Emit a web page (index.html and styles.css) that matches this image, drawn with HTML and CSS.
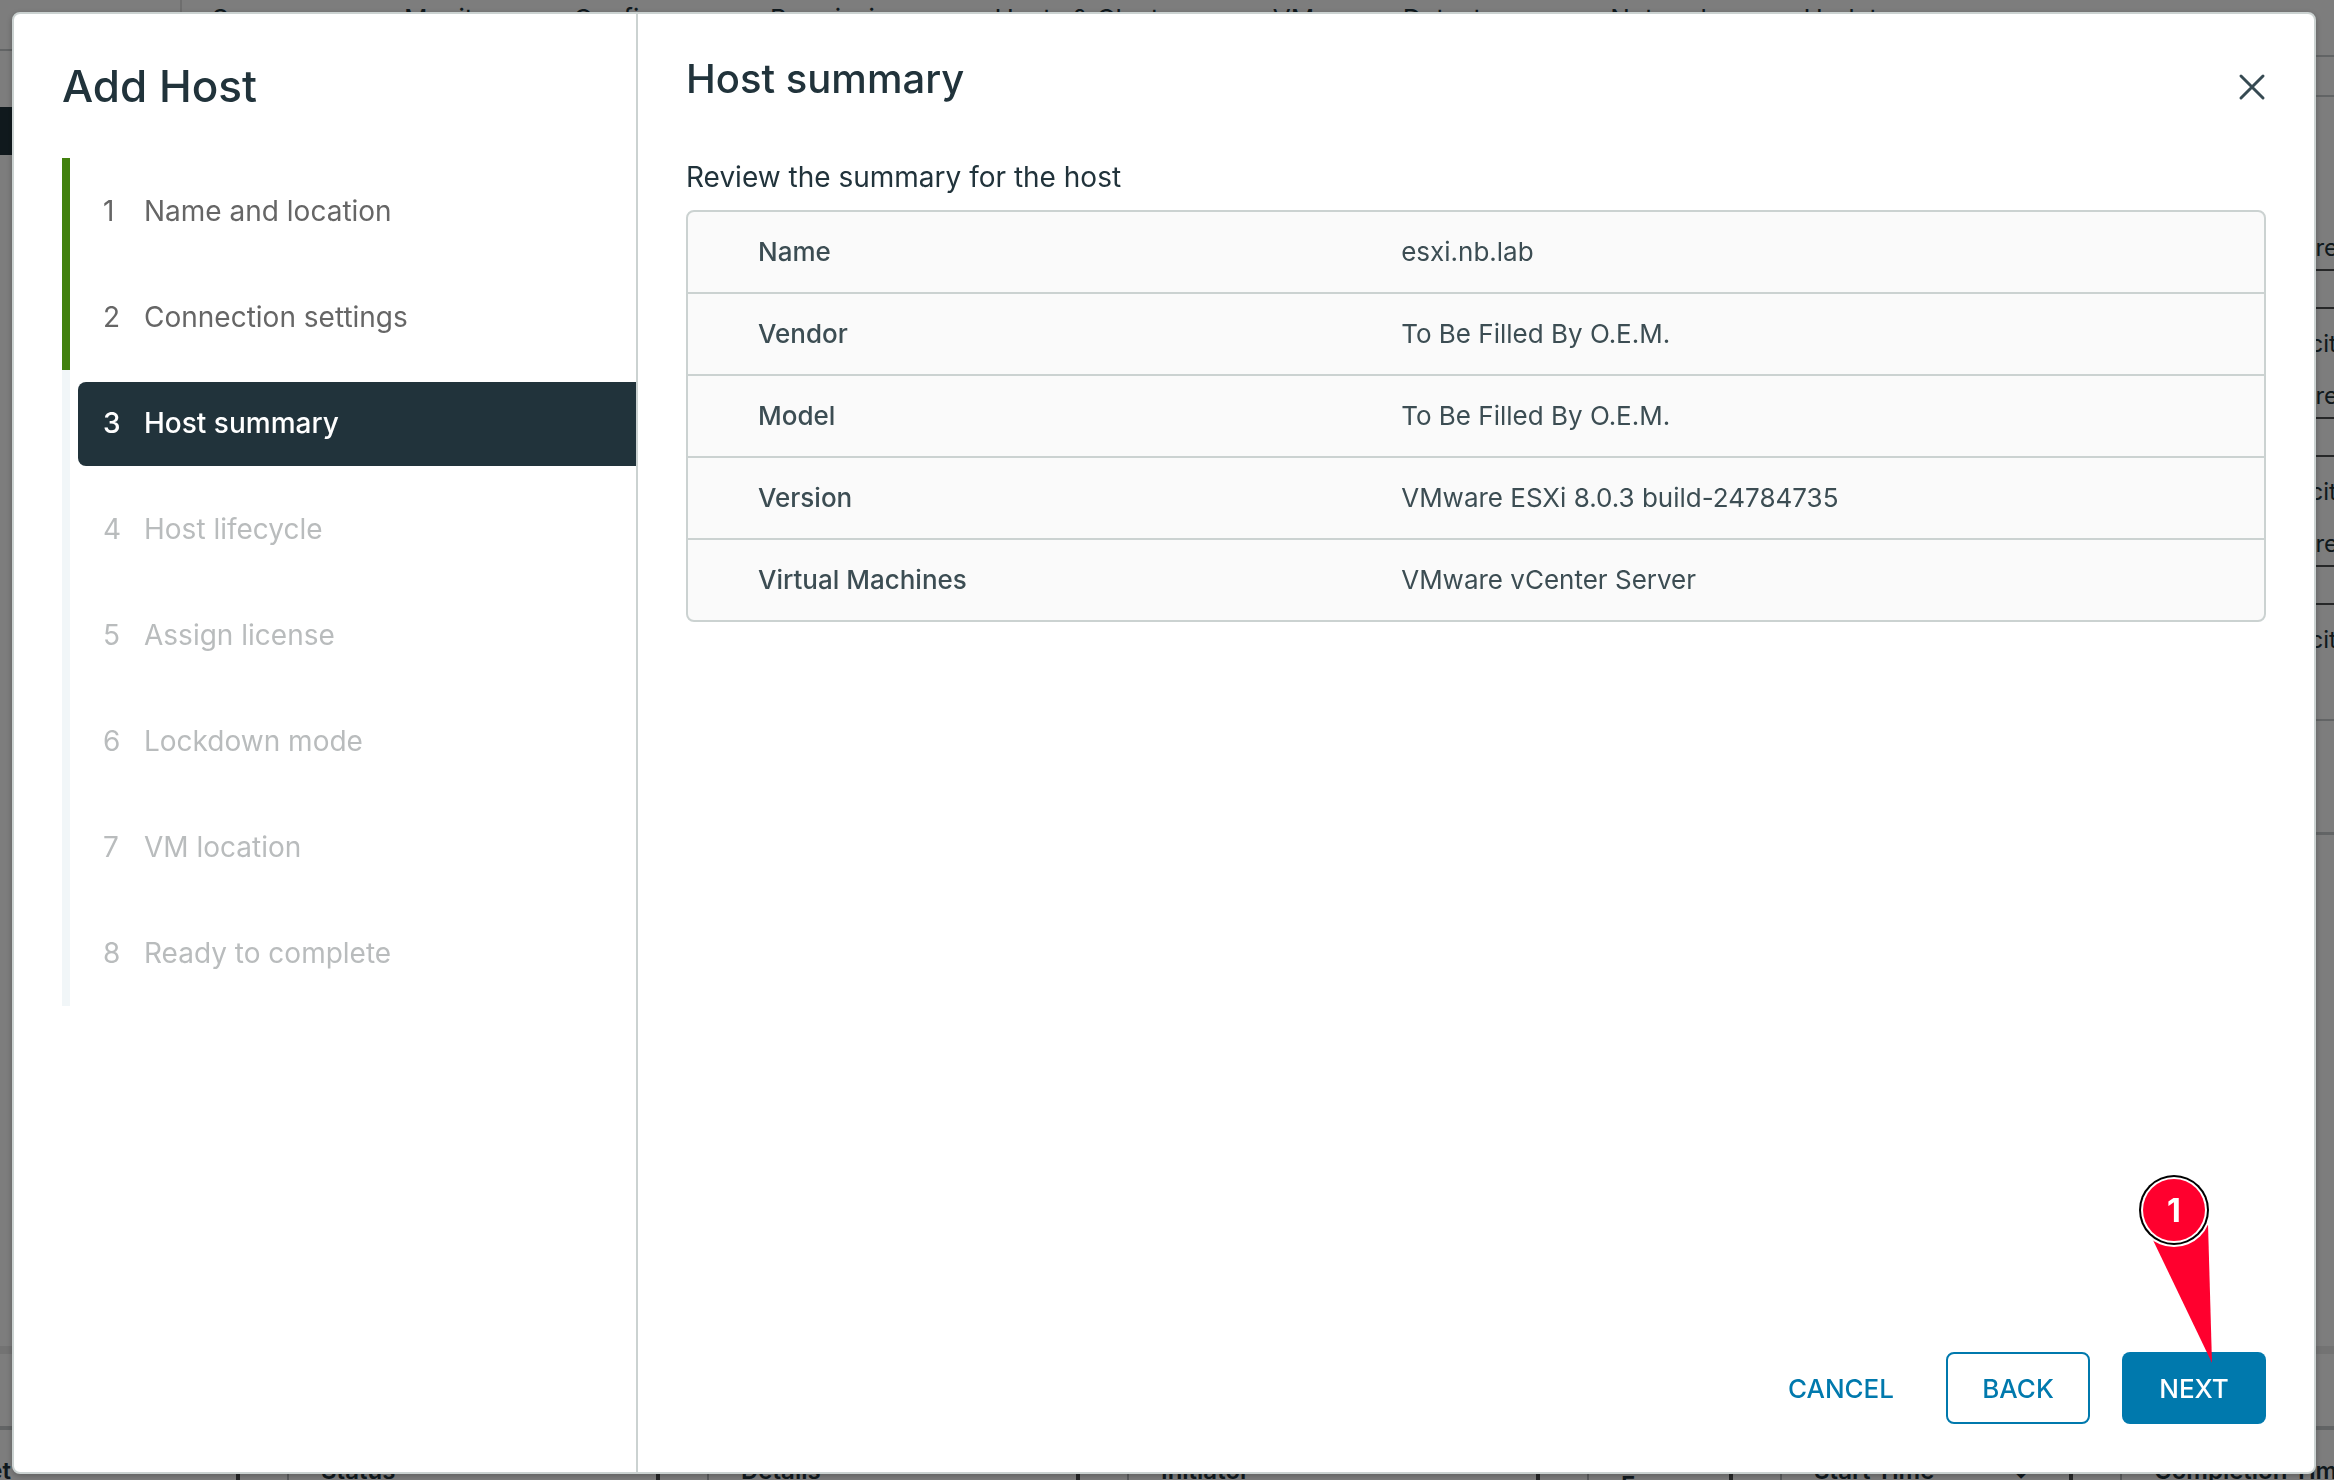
FILE: index.html
```html
<!DOCTYPE html>
<html lang="en">
<head>
    <meta charset="UTF-8">
    <meta name="viewport" content="width=device-width, initial-scale=1.0">
    <title>Add Host</title>
    <link rel="stylesheet" href="styles.css">
</head>
<body>

<!-- Page behind the wizard -->
<div class="app" aria-hidden="true">
    <div class="workspace">
        <div class="sidebar">
            <div class="sidebar-toolbar"></div>
            <div class="tree-selected"></div>
        </div>
        <div class="content">
            <div class="tabs">
                <span>Summary</span>
                <span>Monitor</span>
                <span>Configure</span>
                <span>Permissions</span>
                <span>Hosts &amp; Clusters</span>
                <span>VMs</span>
                <span>Datastores</span>
                <span>Networks</span>
                <span>Updates</span>
            </div>
            <div class="subbar"></div>
            <div class="capacity">
                <div class="meter"><span class="free">Free:</span><i></i><span>Capacity:</span></div>
                <div class="meter"><span class="free">Free:</span><i></i><span>Capacity:</span></div>
                <div class="meter"><span class="free">Free:</span><i></i><span>Capacity:</span></div>
            </div>
            <div class="card-footer"></div>
        </div>
    </div>
    <div class="tasks">
        <div class="tasks-title"></div>
        <div class="tasks-head">
            <div class="first">Target</div>
            <div>Status</div>
            <div>Details</div>
            <div>Initiator</div>
            <div class="queued">For</div>
            <div>Start Time <span class="sort">↓</span></div>
            <div class="last">Completion Time</div>
        </div>
    </div>
</div>

<div class="backdrop">
    <div class="modal" role="dialog" aria-labelledby="wizardTitle">
        <nav class="wizard-nav">
            <h1 id="wizardTitle">Add Host</h1>
            <ol class="steps">
                <li class="done"><button type="button"><span>1</span>Name and location</button></li>
                <li class="done"><button type="button"><span>2</span>Connection settings</button></li>
                <li class="active"><button type="button"><span>3</span>Host summary</button></li>
                <li><button type="button" disabled><span>4</span>Host lifecycle</button></li>
                <li><button type="button" disabled><span>5</span>Assign license</button></li>
                <li><button type="button" disabled><span>6</span>Lockdown mode</button></li>
                <li><button type="button" disabled><span>7</span>VM location</button></li>
                <li><button type="button" disabled><span>8</span>Ready to complete</button></li>
            </ol>
        </nav>

        <section class="wizard-page">
            <header class="page-header">
                <h2>Host summary</h2>
                <button type="button" class="close" aria-label="Close">
                    <svg width="28" height="28" viewBox="0 0 28 28">
                        <path d="M3 3L25 25M25 3L3 25" stroke="#364a52" stroke-width="3" stroke-linecap="round"/>
                    </svg>
                </button>
            </header>

            <p class="intro">Review the summary for the host</p>
            <table class="summary">
                <tbody>
                    <tr><th scope="row">Name</th><td>esxi.nb.lab</td></tr>
                    <tr><th scope="row">Vendor</th><td>To Be Filled By O.E.M.</td></tr>
                    <tr><th scope="row">Model</th><td>To Be Filled By O.E.M.</td></tr>
                    <tr><th scope="row">Version</th><td>VMware ESXi 8.0.3 build-24784735</td></tr>
                    <tr><th scope="row">Virtual Machines</th><td>VMware vCenter Server</td></tr>
                </tbody>
            </table>

            <footer class="page-footer">
                <button type="button" class="btn btn-link">CANCEL</button>
                <button type="button" class="btn btn-outline">BACK</button>
                <div class="next-wrap">
                    <button type="button" class="btn btn-primary">NEXT</button>
                    <svg class="marker" width="80" height="192" viewBox="0 0 80 192">
                        <path d="M16 66L72 52L76 191Z" fill="#ff002e"/>
                        <circle cx="38" cy="38" r="37" fill="#fff"/>
                        <circle cx="38" cy="38" r="35" fill="#000"/>
                        <circle cx="38" cy="38" r="33" fill="#fff"/>
                        <circle cx="38" cy="38" r="31" fill="#ff002e"/>
                        <text x="38" y="50" text-anchor="middle">1</text>
                    </svg>
                </div>
            </footer>
        </section>
    </div>
</div>

</body>
</html>
```

FILE: styles.css
```css
* {
    box-sizing: border-box;
}

body {
    margin: 0;
    font-family: Inter, 'Open Sans', sans-serif;
    font-size: 26px;
    color: #21333b;
    background-color: #fafafa;
}

button {
    font-family: inherit;
    cursor: pointer;
}

/* page behind the wizard */
.app {
    display: flex;
    flex-direction: column;
    height: 100vh;
    overflow: hidden;
    white-space: nowrap;
}

.workspace {
    flex: 1;
    display: flex;
    min-height: 0;
}

.sidebar {
    width: 182px;
    border-right: 2px solid #dcdcdc;
}

.sidebar-toolbar {
    height: 51px;
    border-bottom: 2px solid #c4c8ca;
}

.tree-selected {
    height: 48px;
    margin-top: 56px;
    background-color: #21333b;
}

.content {
    flex: 1;
    min-width: 0;
    display: flex;
    flex-direction: column;
    overflow: hidden;
}

.tabs {
    display: flex;
    gap: 75px;
    height: 57px;
    padding-left: 30px;
    line-height: 38px;
    border-bottom: 2px solid #c4c8ca;
}

.subbar {
    height: 40px;
    border-bottom: 2px solid #c4c8ca;
}

.capacity {
    height: 624px;
    padding-top: 135px;
    border-bottom: 2px solid #c4c8ca;
}

.meter {
    display: flex;
    flex-direction: column;
    align-items: flex-end;
    height: 148px;
    font-size: 24px;
    line-height: 32px;
}

.meter span {
    width: 84px;
}

.meter .free {
    width: 32px;
}

.meter i {
    width: 100%;
    height: 40px;
    margin: 5px 0 19px;
    border: 2px solid #4c4f50;
    border-right: 0;
}

.card-footer {
    height: 114px;
    border-bottom: 3px solid #c4c8ca;
}

.tasks {
    border-top: 8px solid #e6e6e6;
}

.tasks-title {
    height: 76px;
    border-bottom: 4px solid #c4c8ca;
}

.tasks-head {
    display: grid;
    grid-template-columns: 287px 420fr 420fr 460fr 193fr 340fr 214fr;
    height: 50px;
    font-size: 24px;
    font-weight: 600;
    line-height: 82px;
    overflow: hidden;
}

.tasks-head div {
    min-width: 0;
    padding-left: 32px;
    border-left: 2px solid #b8bcbe;
    background: linear-gradient(#4c4f50, #4c4f50) right 47px top 44px / 4px 6px no-repeat;
}

.tasks-head .first {
    padding: 0 276px 0 0;
    border-left: 0;
    direction: rtl;
}

.tasks-head .queued {
    line-height: 112px;
}

.tasks-head .last {
    background: none;
}

.sort {
    margin-left: 70px;
}

/* wizard */
.backdrop {
    position: fixed;
    inset: 0;
    padding: 12px 18px 6px 12px;
    background-color: rgba(0, 0, 0, 0.5);
}

.modal {
    display: flex;
    height: 100%;
    background-color: #fff;
    border: 2px solid #cbd2d1;
    border-radius: 8px;
    box-shadow: 0 2px 6px rgba(0, 0, 0, 0.25);
}

.wizard-nav {
    width: 624px;
    padding-left: 48px;
    border-right: 2px solid #cbd2d1;
}

h1,
h2 {
    margin: 0;
    font-weight: 500;
}

h1 {
    padding-top: 48px;
    font-size: 44px;
    line-height: 48px;
}

.steps {
    margin: 48px 0 0;
    padding: 0;
    list-style: none;
}

.steps li {
    height: 106px;
    padding: 12px 0 10px 8px;
    border-left: 8px solid #f1f6f8;
}

.steps .done {
    border-left-color: #42810e;
}

.steps button {
    display: flex;
    align-items: center;
    width: 100%;
    height: 84px;
    padding: 0 0 2px 25px;
    border: 0;
    border-radius: 8px 0 0 8px;
    background: none;
    color: #666;
    font-size: 28px;
    text-align: left;
}

.steps button span {
    width: 41px;
}

.steps button:disabled {
    color: #b9bcbd;
    cursor: default;
}

.steps .active button {
    background-color: #21333b;
    color: #fff;
    font-weight: 500;
}

.wizard-page {
    flex: 1;
    display: flex;
    flex-direction: column;
    padding: 41px 48px 48px;
}

.page-header {
    display: flex;
    justify-content: space-between;
    align-items: flex-start;
}

h2 {
    font-size: 40px;
    line-height: 48px;
}

.close {
    margin-top: 18px;
    padding: 0;
    border: 0;
    background: none;
}

.close svg {
    display: block;
}

.intro {
    margin: 56px 0 15px;
    font-size: 28px;
    line-height: 36px;
}

.summary {
    width: 100%;
    border: 2px solid #cbd2d1;
    border-radius: 8px;
    border-spacing: 0;
    background-color: #fafafa;
    color: #3c4d53;
}

.summary th,
.summary td {
    height: 82px;
    padding: 0 0 2px 4px;
    border-bottom: 2px solid #cbd2d1;
    font-weight: 400;
    text-align: left;
}

.summary th {
    width: 45%;
    padding-left: 70px;
    font-weight: 500;
}

.summary tr:last-child th,
.summary tr:last-child td {
    height: 80px;
    border-bottom: 0;
}

.page-footer {
    display: flex;
    justify-content: flex-end;
    gap: 32px;
    margin-top: auto;
}

.btn {
    min-width: 144px;
    height: 72px;
    padding: 0 18px;
    border: 2px solid transparent;
    border-radius: 8px;
    background: none;
    color: #0079ad;
    font-size: 26px;
    font-weight: 500;
}

.btn-outline {
    border-color: #0079ad;
}

.btn-primary {
    background-color: #0079ad;
    color: #fff;
}

.next-wrap {
    position: relative;
}

/* numbered pin pointing at the button */
.marker {
    position: absolute;
    right: 50px;
    bottom: 60px;
}

.marker text {
    fill: #fff;
    font-size: 32px;
    font-weight: 700;
}
```
